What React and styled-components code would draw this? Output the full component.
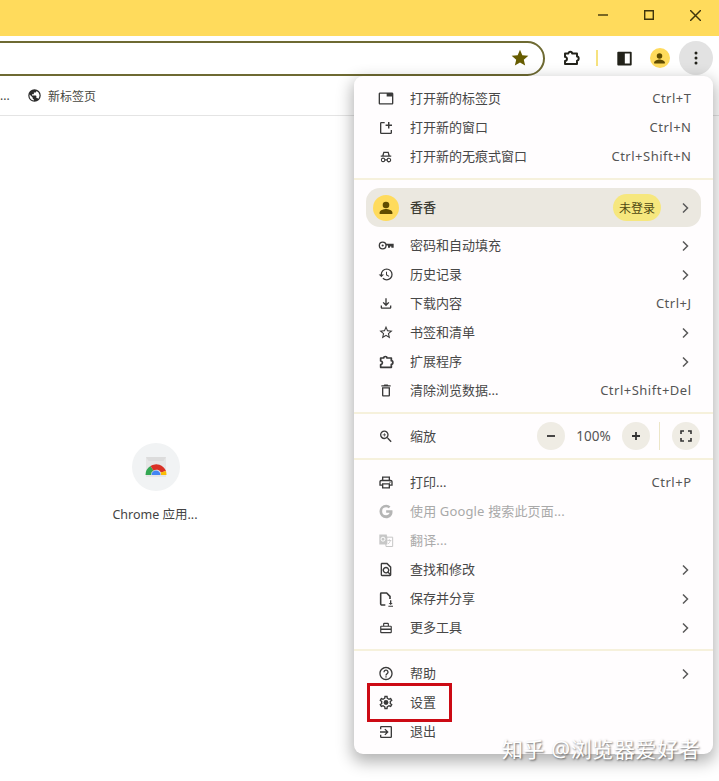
import React from "react";
import styled, { createGlobalStyle } from "styled-components";
import {
  MdOutlineHistory, MdOutlineFileDownload, MdStarBorder, MdOutlineDelete, MdOutlineZoomIn,
  MdOutlinePrint, MdOutlineHelpOutline, MdOutlineFindInPage, MdStar,
} from "react-icons/md";

const Global = createGlobalStyle`
  html, body { margin: 0; padding: 0; background: #fff; }
  body { font-family: "Noto Sans", "Noto Sans CJK SC", sans-serif; width: 719px; height: 781px; overflow: hidden; }
  * { box-sizing: border-box; }
`;

const Page = styled.div`
  position: relative; width: 719px; height: 781px; overflow: hidden;
  display: flex; flex-direction: column; background: #fff;
`;
const TitleBar = styled.div`
  height: 36px; flex: none; background: #ffdb5c; display: flex; justify-content: flex-end; align-items: center; padding-right: 1px; padding-bottom: 6px;
`;
const WinBtn = styled.div`
  width: 46px; height: 30px; display: flex; align-items: center; justify-content: center; color: #3f350c;
`;
const Toolbar = styled.div`
  height: 44px; flex: none; display: flex; align-items: center; background: #fff;
`;
const Omnibox = styled.div`
  margin-left: -20px; width: 565px; height: 35px; flex: none; border: 2px solid #6e6a32; border-radius: 18px;
  display: flex; align-items: center; justify-content: flex-end; padding-right: 13px; color: #665c00; font-size: 20px; background: #fff;
`;
const ToolIcon = styled.div`
  width: ${p => p.$w || 34}px; height: 34px; flex: none; display: flex; align-items: center; justify-content: center; color: #22221a;
`;
const ToolDivider = styled.div`
  width: 2px; height: 16px; background: #f6e27f; margin: 0 10px 0 0; flex: none;
`;
const MenuButton = styled(ToolIcon)`
  width: 34px; border-radius: 50%; background: #e2e2e2;
`;
const Avatar = styled.div`
  width: ${p => p.$size}px; height: ${p => p.$size}px; border-radius: 50%; background: #ffdb5c; flex: none;
  display: flex; align-items: center; justify-content: center; color: #5f4b00;
`;
const Bookmarks = styled.div`
  height: 36px; flex: none; border-bottom: 1px solid #e4e4e4; display: flex; align-items: center; padding-bottom: 4px;
  font-size: 12px; color: #47473f;
`;
const Ellipsis = styled.span`width: 27px; flex: none;`;
const BookmarkLabel = styled.span`margin-left: 6px;`;
const Content = styled.div`
  flex: 1; padding: 327px 0 0 108px;
`;
const Tile = styled.div`
  width: 96px; display: flex; flex-direction: column; align-items: center; gap: 15px; font-size: 12.5px; color: #444;
`;
const TileCircle = styled.div`
  width: 48px; height: 48px; border-radius: 50%; background: #f1f3f4; display: flex; align-items: center; justify-content: center;
`;
const TileLabel = styled.div`white-space: nowrap; line-height: 18px; margin-right: 2px;`;

const Menu = styled.div`
  position: absolute; left: 354px; top: 76px; width: 359px; height: 678px; background: #fffdfe; border-radius: 9px;
  box-shadow: 0 6px 16px 2px rgba(0,0,0,.3); padding: 8px 0 0;
  font-size: 13px; color: #474747;
`;
const Divider = styled.div`
  height: 2px; background: #f6f1dc; margin: ${p => p.$m || "7px 0 8px"};
`;
const Row = styled.div`
  height: 29px; display: flex; align-items: center; padding: 0 22px 0 24px; color: ${p => p.$dim ? "#a9a9a9" : "#474747"};
  letter-spacing: ${p => p.$dim ? ".15px" : "0"};
`;
const IconSlot = styled.div`
  width: 16px; height: 16px; flex: none; margin-right: 16px; display: flex; align-items: center; justify-content: center; color: ${p => p.$dim ? "#b5b5b5" : "#3a3a3a"};
  font-size: 17px;
`;
const Label = styled.span`flex: 1; white-space: nowrap; position: relative; top: -1px;`;
const Shortcut = styled.span`color: #555; white-space: nowrap; letter-spacing: .5px; margin-right: -.5px; position: relative; top: -1px;`;
const Chevron = styled.svg`width: 8px; height: 12px; margin-right: 2px; flex: none; color: #5a5a5a;`;
const ProfileRow = styled.div`
  height: 39px; margin: 1px 12px 4px; border-radius: 14px; background: #ebe8e0; display: flex; align-items: center; padding: 0 10px 0 7px;
  color: #3a3a32;
`;
const ProfileName = styled.span`flex: 1; margin-left: 11px; position: relative; top: -1px; font-weight: 500;`;
const Pill = styled.span`
  height: 27px; width: 48px; border-radius: 14px; background: #f6e77e; color: #4f4812; display: flex; align-items: center; justify-content: center; font-size: 12px; margin-right: 20px; white-space: nowrap;
`;
const ZoomRow = styled.div`
  height: 44px; display: flex; align-items: center; padding: 0 13px 0 24px;
`;
const RoundBtn = styled.div`
  width: 28px; height: 28px; border-radius: 50%; background: #efece4; display: flex; align-items: center; justify-content: center; color: #333; flex: none;
`;
const ZoomValue = styled.span`width: 57px; text-align: center; color: #555; font-size: 13.5px;`;
const ZoomSep = styled.div`width: 1px; height: 28px; background: #ece6c8; margin: 0 12px 0 9px; flex: none;`;

const Highlight = styled.div`
  position: absolute; left: 367px; top: 683px; width: 85px; height: 39px; border: 3px solid #cc0a14; pointer-events: none;
`;
const Watermark = styled.div`
  position: absolute; left: 502px; top: 735px; font-size: 21px; line-height: 28px; color: #fff; white-space: nowrap; letter-spacing: .6px;
  text-shadow: 1px 1px 2px rgba(60,60,60,.75);
`;

const Chev = () => (
  <Chevron viewBox="0 0 8 12"><path d="M2 1.500 6.500 6 2 10.500" fill="none" stroke="currentColor" strokeWidth="1.500" /></Chevron>
);
const Ico = ({ children, size = 16, vb = "0 0 24 24" }) => (
  <svg width={size} height={size} viewBox={vb} fill="currentColor">{children}</svg>
);
const Person = ({ size }) => (
  <Ico size={size}><circle cx="12" cy="8" r="4.400" /><path d="M3.500 20v-2c0-3 5.700-4.600 8.500-4.600s8.500 1.600 8.500 4.600v2z" /></Ico>
);
const TabIcon = () => <Ico size={17}><path d="M21 3H3c-1.100 0-2 .9-2 2v14c0 1.100.9 2 2 2h18c1.100 0 2-.9 2-2V5c0-1.100-.9-2-2-2zm0 16H3V5h10v4h8v10z" /></Ico>;
const NewWinIcon = () => <Ico><path d="M5 3h5v2H5v14h14v-4h2v4a2 2 0 0 1-2 2H5a2 2 0 0 1-2-2V5a2 2 0 0 1 2-2zM15 3h2.200v3.800H21v2.200h-3.800v3.800H15V9h-3.600V6.800H15z" /></Ico>;
const IncognitoIcon = () => (
  <Ico size={14}>
    <path d="M7.500 3h9l2 6.500H21V11.500H3V9.500h2.500zM9 5 8 9.500h8L15 5z" />
    <path fillRule="evenodd" d="M7 13a4 4 0 0 1 3.900 3h2.200a4 4 0 1 1-.1 2h-2a4 4 0 1 1-4-5zm0 2a2 2 0 1 0 0 4 2 2 0 0 0 0-4zm10 0a2 2 0 1 0 0 4 2 2 0 0 0 0-4z" />
  </Ico>
);
const KeyIcon = () => (
  <Ico size={17}>
    <circle cx="7" cy="12" r="5" fill="none" stroke="currentColor" strokeWidth="2" />
    <circle cx="7" cy="12" r="1.600" />
    <path d="M12 9.500h11.500v6H20v-2h-2v2h-3v-3.600h-3z" />
  </Ico>
);
const ExtIcon = ({ size = 16 }) => (
  <Ico size={size}>
    <path fill="none" stroke="currentColor" strokeWidth="2.600" strokeLinejoin="round" d="M4 6h4.500C8.500 3 13.500 3 13.500 6H20v4C23 10 23 15.500 20 15.500V20H4v-4C7.500 15.500 7.500 11 4 10.500z" />
  </Ico>
);
const SidePanelIcon = () => (
  <Ico size={15}><path fillRule="evenodd" d="M2 1h20a1.500 1.500 0 0 1 1.500 1.500v19A1.500 1.500 0 0 1 22 23H2a1.500 1.500 0 0 1-1.500-1.500v-19A1.500 1.500 0 0 1 2 1zm10.500 3v16h8V4z" /></Ico>
);
const GoogleIcon = () => (
  <Ico size={17}><path d="M12.200 10.300v3.500h5.200c-.5 2.400-2.500 3.800-5.200 3.800a6 6 0 0 1 0-12c1.500 0 2.800.5 3.900 1.400l2.600-2.600A9.700 9.700 0 0 0 12.200 2a10 10 0 0 0 0 20c5.500 0 9.600-3.900 9.600-9.800 0-.6-.1-1.300-.2-1.900z" /></Ico>
);
const TranslateIcon = () => (
  <Ico size={17}>
    <path d="M2 3h11l1 4v11H2z" fill="#c7c7c7" />
    <path d="M11 7h11v14H12z" fill="none" stroke="#c7c7c7" strokeWidth="1.500" />
    <circle cx="7.500" cy="10" r="3" fill="none" stroke="#fff" strokeWidth="1.500" />
    <path d="M14 12h6M17 10v2M15 17c2-1 3-3 3.500-5" fill="none" stroke="#c7c7c7" strokeWidth="1.200" />
  </Ico>
);
const ShareIcon = () => (
  <Ico>
    <path fill="none" stroke="currentColor" strokeWidth="2.400" d="M11 21H6a2 2 0 0 1-2-2V4a1 1 0 0 1 1-1h8l5 5v4" />
    <path d="M18 14h2v4h2l-3 3-3-3h2zM15.500 22h7v1.500h-7z" />
  </Ico>
);
const ToolsIcon = () => (
  <Ico size={14}><path fillRule="evenodd" d="M9 3h6a2 2 0 0 1 2 2v3h3a2 2 0 0 1 2 2v9a2 2 0 0 1-2 2H4a2 2 0 0 1-2-2v-9a2 2 0 0 1 2-2h3V5a2 2 0 0 1 2-2zm0 2v3h6V5zm-5 5v3h16v-3zm0 5.500V19h16v-3.500z" /></Ico>
);
const SettingsIcon = () => (
  <Ico size={17}>
    <path d="M19.430 12.980c.04-.32.07-.64.07-.98 0-.34-.03-.66-.07-.98l2.110-1.650c.19-.15.24-.42.12-.64l-2-3.460c-.09-.16-.26-.25-.44-.25-.06 0-.12.01-.17.03l-2.490 1c-.52-.4-1.080-.73-1.690-.98l-.38-2.650C14.460 2.180 14.250 2 14 2h-4c-.25 0-.46.18-.49.42l-.38 2.650c-.61.25-1.170.59-1.690.98l-2.490-1c-.06-.02-.12-.03-.18-.03-.17 0-.34.09-.43.25l-2 3.460c-.13.22-.07.49.12.64l2.110 1.650c-.04.32-.07.65-.07.98 0 .33.03.66.07.98l-2.110 1.650c-.19.15-.24.42-.12.64l2 3.460c.09.16.26.25.44.25.06 0 .12-.01.17-.03l2.490-1c.52.4 1.080.73 1.690.98l.38 2.650c.03.24.24.42.49.42h4c.25 0 .46-.18.49-.42l.38-2.650c.61-.25 1.170-.59 1.690-.98l2.490 1c.06.02.12.03.18.03.17 0 .34-.09.43-.25l2-3.460c.12-.22.07-.49-.12-.64l-2.110-1.650zm-1.980-1.710c.04.31.05.52.05.73 0 .21-.02.43-.05.73l-.14 1.130.89.7 1.080.84-.7 1.210-1.270-.51-1.040-.42-.9.68c-.43.32-.84.56-1.250.73l-1.060.43-.16 1.130-.2 1.350h-1.400l-.19-1.350-.16-1.130-1.060-.43c-.43-.18-.83-.41-1.230-.71l-.91-.7-1.060.43-1.270.51-.7-1.210 1.080-.84.89-.7-.14-1.130c-.03-.31-.05-.54-.05-.74s.02-.43.05-.73l.14-1.130-.89-.7-1.080-.84.7-1.210 1.270.51 1.040.42.9-.68c.43-.32.84-.56 1.250-.73l1.060-.43.16-1.130.2-1.350h1.390l.19 1.350.16 1.130 1.060.43c.43.18.83.41 1.230.71l.91.7 1.060-.43 1.270-.51.7 1.210-1.070.85-.89.7.14 1.130z" />
    <circle cx="12" cy="12" r="3.600" />
  </Ico>
);
const ExitIcon = () => (
  <Ico>
    <path fillRule="evenodd" d="M5 3h14a2 2 0 0 1 2 2v14a2 2 0 0 1-2 2H5a2 2 0 0 1-2-2v-3h2v3h14V5H5v3H3V5a2 2 0 0 1 2-2z" />
    <path d="M11 7l5 5-5 5-1.400-1.400L12.200 13H3v-2h9.200L9.600 8.400z" />
  </Ico>
);
const Globe = () => (
  <svg width="15" height="15" viewBox="0 0 24 24"><path fill="#2b2b2b" d="M12 2a10 10 0 1 0 0 20 10 10 0 0 0 0-20zM4 12c0-.6.1-1.200.2-1.800L9 15v1c0 1.100.9 2 2 2v1.900A8 8 0 0 1 4 12zm13.900 5.400c-.3-.8-1-1.400-1.900-1.400h-1v-3c0-.6-.4-1-1-1H8v-2h2c.6 0 1-.4 1-1V7h2c1.100 0 2-.9 2-2v-.4a8 8 0 0 1 2.900 12.800z" /></svg>
);
const ChromeApp = () => (
  <svg width="24" height="24" viewBox="0 0 24 24">
    <path d="M2 2h20v20H2z" fill="#e6e6e6" />
    <path d="M2 2h20l-2.500 4h-15z" fill="#dcdcdc" />
    <path d="M1.500 20a10.500 10.500 0 0 1 5-9l3 4.500a5 5 0 0 0-2.500 4.500z" fill="#34a853" />
    <path d="M6.500 11a10.500 10.500 0 0 1 15.500 5l-5 1.500a5.300 5.300 0 0 0-7.500-2z" fill="#d93025" />
    <path d="M22 16c.3 1.300.5 2.600.5 4H17c0-.9 0-1.700-.4-2.500z" fill="#fbbc04" />
    <path d="M7.500 20a4.500 4.500 0 0 1 9 0z" fill="#4285f4" />
  </svg>
);

const top = [
  [<TabIcon />, "打开新的标签页", "Ctrl+T"],
  [<NewWinIcon />, "打开新的窗口", "Ctrl+N"],
  [<IncognitoIcon />, "打开新的无痕式窗口", "Ctrl+Shift+N"],
];
const mid = [
  [<KeyIcon />, "密码和自动填充"],
  [<MdOutlineHistory />, "历史记录"],
  [<MdOutlineFileDownload />, "下载内容", "Ctrl+J"],
  [<MdStarBorder />, "书签和清单"],
  [<ExtIcon />, "扩展程序"],
  [<MdOutlineDelete />, "清除浏览数据...", "Ctrl+Shift+Del"],
];
const lower = [
  [<MdOutlinePrint />, "打印...", "Ctrl+P"],
  [<GoogleIcon />, "使用 Google 搜索此页面...", "", true],
  [<TranslateIcon />, "翻译...", "", true],
  [<MdOutlineFindInPage />, "查找和修改"],
  [<ShareIcon />, "保存并分享"],
  [<ToolsIcon />, "更多工具"],
];
const bottom = [
  [<MdOutlineHelpOutline />, "帮助"],
  [<SettingsIcon />, "设置", ""],
  [<ExitIcon />, "退出", ""],
];
const noChevron = new Set(["设置", "退出"]);

const Items = ({ items }) => items.map(([icon, label, shortcut, dim]) => (
  <Row key={label} $dim={dim}>
    <IconSlot $dim={dim}>{icon}</IconSlot>
    <Label>{label}</Label>
    {shortcut ? <Shortcut>{shortcut}</Shortcut> : (dim || noChevron.has(label) ? null : <Chev />)}
  </Row>
));

export default function App() {
  return (
    <Page>
      <Global />
      <TitleBar>
        <WinBtn><svg width="10" height="10" viewBox="0 0 10 10"><path d="M0 5h10" stroke="currentColor" strokeWidth="1.400" /></svg></WinBtn>
        <WinBtn><svg width="10" height="10" viewBox="0 0 10 10"><path d="M.7.7h8.600v8.600H.7z" fill="none" stroke="currentColor" strokeWidth="1.400" /></svg></WinBtn>
        <WinBtn><svg width="11" height="11" viewBox="0 0 10 10"><path d="M0 0l10 10M10 0 0 10" stroke="currentColor" strokeWidth="1.300" /></svg></WinBtn>
      </TitleBar>
      <Toolbar>
        <Omnibox><MdStar /></Omnibox>
        <ToolIcon $w={51}><ExtIcon size={18} /></ToolIcon>
        <ToolDivider />
        <ToolIcon $w={32}><SidePanelIcon /></ToolIcon>
        <ToolIcon $w={39}><Avatar $size={20}><Person size={15} /></Avatar></ToolIcon>
        <MenuButton>
          <svg width="4" height="14" viewBox="0 0 4 14" fill="currentColor"><circle cx="2" cy="2" r="1.500" /><circle cx="2" cy="7" r="1.500" /><circle cx="2" cy="12" r="1.500" /></svg>
        </MenuButton>
      </Toolbar>
      <Bookmarks>
        <Ellipsis>...</Ellipsis>
        <Globe />
        <BookmarkLabel>新标签页</BookmarkLabel>
      </Bookmarks>
      <Content>
        <Tile>
          <TileCircle><ChromeApp /></TileCircle>
          <TileLabel>Chrome 应用...</TileLabel>
        </Tile>
      </Content>
      <Menu>
        <Items items={top} />
        <Divider />
        <ProfileRow>
          <Avatar $size={26}><Person size={18} /></Avatar>
          <ProfileName>香香</ProfileName>
          <Pill>未登录</Pill>
          <Chev />
        </ProfileRow>
        <Items items={mid} />
        <Divider $m="7px 0 0" />
        <ZoomRow>
          <IconSlot><MdOutlineZoomIn /></IconSlot>
          <Label>缩放</Label>
          <RoundBtn><svg width="10" height="10" viewBox="0 0 10 10"><path d="M1 5h8" stroke="currentColor" strokeWidth="1.800" /></svg></RoundBtn>
          <ZoomValue>100%</ZoomValue>
          <RoundBtn><svg width="10" height="10" viewBox="0 0 10 10"><path d="M1 5h8M5 1v8" stroke="currentColor" strokeWidth="1.800" /></svg></RoundBtn>
          <ZoomSep />
          <RoundBtn><svg width="12" height="12" viewBox="0 0 12 12"><path d="M1 4V1h3M8 1h3v3M11 8v3H8M4 11H1V8" fill="none" stroke="currentColor" strokeWidth="1.600" /></svg></RoundBtn>
        </ZoomRow>
        <Divider $m="0 0 8px" />
        <Items items={lower} />
        <Divider />
        <Items items={bottom} />
      </Menu>
      <Highlight />
      <Watermark>知乎 @浏览器爱好者</Watermark>
    </Page>
  );
}
